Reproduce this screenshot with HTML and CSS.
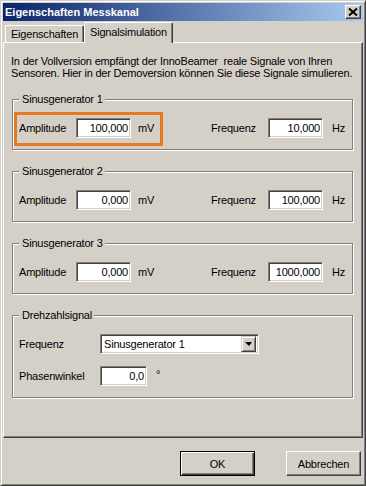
FILE: index.html
```html
<!DOCTYPE html>
<html lang="de">
<head>
    <meta charset="UTF-8">
    <meta name="viewport" content="width=device-width, initial-scale=1.0">
    <title>Eigenschaften Messkanal</title>
    <link rel="stylesheet" href="styles.css">
</head>
<body>
    <div class="window">
        <div class="titlebar">
            <span class="title">Eigenschaften Messkanal</span>
            <button type="button" class="close-btn" aria-label="Schließen">
                <svg width="14" height="12" viewBox="0 0 14 12">
                    <path d="M3 2.5 L11 9.5 M11 2.5 L3 9.5" stroke="#000" stroke-width="2" fill="none"/>
                </svg>
            </button>
        </div>

        <div class="tabs">
            <div class="tab">Eigenschaften</div>
            <div class="tab tab-active">Signalsimulation</div>
        </div>

        <div class="panel">
            <p class="intro">In der Vollversion empfängt der InnoBeamer&nbsp; reale Signale von Ihren<br>Sensoren. Hier in der Demoversion können Sie diese Signale simulieren.</p>

            <fieldset class="group">
                <legend>Sinusgenerator 1</legend>
                <div class="row">
                    <div class="highlight"></div>
                    <label>Amplitude</label>
                    <input type="text" class="field" value="100,000">
                    <span class="unit">mV</span>
                    <label>Frequenz</label>
                    <input type="text" class="field" value="10,000">
                    <span class="unit unit-hz">Hz</span>
                </div>
            </fieldset>

            <fieldset class="group">
                <legend>Sinusgenerator 2</legend>
                <div class="row">
                    <label>Amplitude</label>
                    <input type="text" class="field" value="0,000">
                    <span class="unit">mV</span>
                    <label>Frequenz</label>
                    <input type="text" class="field" value="100,000">
                    <span class="unit unit-hz">Hz</span>
                </div>
            </fieldset>

            <fieldset class="group">
                <legend>Sinusgenerator 3</legend>
                <div class="row">
                    <label>Amplitude</label>
                    <input type="text" class="field" value="0,000">
                    <span class="unit">mV</span>
                    <label>Frequenz</label>
                    <input type="text" class="field" value="1000,000">
                    <span class="unit unit-hz">Hz</span>
                </div>
            </fieldset>

            <fieldset class="group">
                <legend>Drehzahlsignal</legend>
                <div class="speed-grid">
                    <label>Frequenz</label>
                    <div class="combo">
                        <span class="combo-text">Sinusgenerator 1</span>
                        <span class="combo-btn"><span class="arrow"></span></span>
                    </div>
                    <label>Phasenwinkel</label>
                    <div class="phase">
                        <input type="text" class="field field-small" value="0,0">
                        <span class="degree">°</span>
                    </div>
                </div>
            </fieldset>
        </div>

        <div class="footer">
            <button type="button" class="btn btn-default">OK</button>
            <button type="button" class="btn">Abbrechen</button>
        </div>
    </div>
</body>
</html>
```

FILE: styles.css
```css
* {
    margin: 0;
    padding: 0;
    box-sizing: border-box;
}

body {
    font-family: "Liberation Sans", Arial, sans-serif;
    font-size: 11px;
    letter-spacing: -0.2px;
    color: #000;
    background: #d4d0c8;
}

.window {
    width: 366px;
    height: 486px;
    background: #d4d0c8;
    border: 1px solid;
    border-color: #d4d0c8 #404040 #404040 #d4d0c8;
    box-shadow: inset 1px 1px 0 #fff, inset -1px -1px 0 #808080;
    padding: 2px;
}

/* title bar */
.titlebar {
    height: 18px;
    display: flex;
    align-items: center;
    justify-content: space-between;
    padding: 0 2px 0 2px;
    background: linear-gradient(to right, #0a246a, #a6caf0);
}

.title {
    color: #fff;
    font-weight: bold;
    font-size: 11px;
    letter-spacing: 0;
}

.close-btn {
    width: 16px;
    height: 14px;
    display: flex;
    background: #d4d0c8;
    border: 1px solid;
    border-color: #fff #404040 #404040 #fff;
    box-shadow: inset -1px -1px 0 #808080;
}

/* tabs */
.tabs {
    display: flex;
    align-items: flex-end;
    height: 20px;
    margin-top: 1px;
    padding-left: 2px;
}

.tab {
    width: 79px;
    height: 17px;
    line-height: 16px;
    text-align: center;
    white-space: nowrap;
    border: 1px solid;
    border-bottom: none;
    border-color: #fff #404040 #fff #fff;
    border-radius: 2px 2px 0 0;
    box-shadow: inset -1px 0 0 #808080;
    background: #d4d0c8;
}

.tab-active {
    width: 89px;
    height: 21px;
    line-height: 19px;
    margin-bottom: -1px;
    position: relative;
    z-index: 1;
}

/* tab page */
.panel {
    height: 396px;
    border: 1px solid;
    border-color: #fff #404040 #404040 #fff;
    box-shadow: inset -1px -1px 0 #808080;
    padding: 12px 9px 0 8px;
}

.intro {
    line-height: 12px;
    white-space: nowrap;
    margin: 0 0 14px -1px;
}

.group {
    margin: 0 0 15px 0;
    padding: 12px 6px 11px 6px;
    border: 1px solid #808080;
    box-shadow: 1px 1px 0 #fff, inset 1px 1px 0 #fff;
    min-width: 0;
}

.group legend {
    padding: 0 2px 0 3px;
    line-height: 13px;
    background: #d4d0c8;
}

.row {
    position: relative;
    display: grid;
    grid-template-columns: 57px 55px 80px 57px 55px auto;
    align-items: center;
}

.highlight {
    position: absolute;
    left: -5px;
    top: -6px;
    width: 149px;
    height: 34px;
    border: 3px solid #e8791e;
    pointer-events: none;
}

.field {
    width: 55px;
    height: 20px;
    font: inherit;
    letter-spacing: inherit;
    color: #000;
    text-align: right;
    padding: 0 2px 0 2px;
    background: #fff;
    border: 1px solid;
    border-color: #808080 #fff #fff #808080;
    box-shadow: inset 1px 1px 0 #404040, inset -1px -1px 0 #d4d0c8;
    outline: none;
}

.field-small {
    width: 47px;
}

.unit {
    padding-left: 7px;
}

.unit-hz {
    padding-left: 9px;
}

/* speed signal */
.speed-grid {
    display: grid;
    grid-template-columns: 81px auto;
    row-gap: 12px;
    align-items: center;
}

.combo {
    width: 159px;
    height: 20px;
    display: flex;
    align-items: center;
    justify-content: space-between;
    background: #fff;
    border: 1px solid;
    border-color: #808080 #fff #fff #808080;
    box-shadow: inset 1px 1px 0 #404040, inset -1px -1px 0 #d4d0c8;
    padding: 2px;
}

.combo-text {
    padding-left: 1px;
}

.combo-btn {
    width: 15px;
    height: 16px;
    display: flex;
    align-items: center;
    justify-content: center;
    background: #d4d0c8;
    border: 1px solid;
    border-color: #d4d0c8 #404040 #404040 #d4d0c8;
    box-shadow: inset 1px 1px 0 #fff, inset -1px -1px 0 #808080;
}

.arrow {
    width: 0;
    height: 0;
    border-left: 4px solid transparent;
    border-right: 3px solid transparent;
    border-top: 4px solid #000;
}

.phase {
    display: flex;
    align-items: center;
}

.degree {
    padding-left: 9px;
    margin-top: -4px;
}

/* buttons */
.footer {
    display: flex;
    justify-content: flex-end;
    gap: 31px;
    padding: 13px 2px 0 0;
}

.btn {
    width: 75px;
    height: 25px;
    font: inherit;
    letter-spacing: inherit;
    color: #000;
    background: #d4d0c8;
    border: 1px solid;
    border-color: #fff #404040 #404040 #fff;
    box-shadow: inset -1px -1px 0 #808080;
}

.btn-default {
    border-color: #000;
    box-shadow: inset 1px 1px 0 #fff, inset -1px -1px 0 #404040, inset -2px -2px 0 #808080;
}
```
